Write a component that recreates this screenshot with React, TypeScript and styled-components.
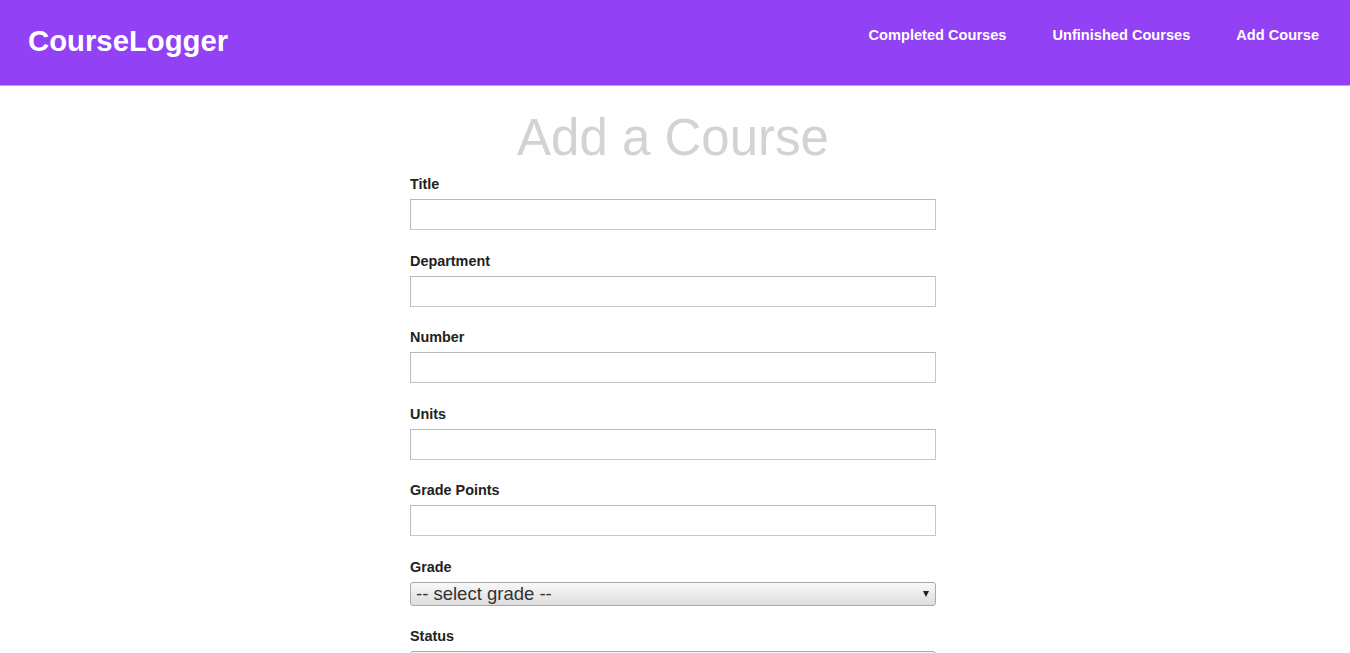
import React from 'react'
import styled, { createGlobalStyle } from 'styled-components'

const GlobalStyle = createGlobalStyle`
    html, body {
        margin: 0;
        padding: 0;
        background: #ffffff;
        font-family: "Liberation Sans", Arial, sans-serif;
    }
`

const fields = ['Title', 'Department', 'Number', 'Units', 'Grade Points']

const App = () => {
    return (
        <>
            <GlobalStyle />
            <NavBar>
                <Logo>CourseLogger</Logo>
                <NavLinks>
                    <NavLink>Completed Courses</NavLink>
                    <NavLink>Unfinished Courses</NavLink>
                    <NavLink>Add Course</NavLink>
                </NavLinks>
            </NavBar>
            <Main>
                <FormBlock>
                    <Heading>Add a Course</Heading>
                    {fields.map((name) => (
                        <Field key={name}>
                            <Label>{name}</Label>
                            <TextInput type="text" />
                        </Field>
                    ))}
                    <Field>
                        <Label>Grade</Label>
                        <SelectWrap>
                            <Select defaultValue="">
                                <option value="">-- select grade --</option>
                            </Select>
                            <Arrow />
                        </SelectWrap>
                    </Field>
                    <Field>
                        <Label>Status</Label>
                        <SelectWrap>
                            <Select defaultValue="">
                                <option value="">-- select status --</option>
                            </Select>
                            <Arrow />
                        </SelectWrap>
                    </Field>
                </FormBlock>
            </Main>
        </>
    )
}

export default App

const NavBar = styled.header`
    display: flex;
    align-items: flex-start;
    justify-content: space-between;
    height: 85px;
    box-sizing: border-box;
    padding: 0 31px 0 28px;
    background: #9241f5;
    box-shadow: 0 1px 0 #c49cf9;
`

const Logo = styled.div`
    color: #ffffff;
    font-size: 29.3px;
    font-weight: 700;
    line-height: 33px;
    margin-top: 24px;
`

const NavLinks = styled.nav`
    display: flex;
    gap: 46px;
    margin-top: 26px;
`

const NavLink = styled.a`
    color: #ffffff;
    font-size: 14.6px;
    font-weight: 700;
    line-height: 18px;
    cursor: pointer;
`

const Main = styled.main`
    display: flex;
    justify-content: center;
    padding-right: 4px;
`

const FormBlock = styled.div`
    display: flex;
    flex-direction: column;
    width: 526px;
`

const Heading = styled.h1`
    margin: 23px 0 9px;
    text-align: center;
    color: #d3d3d3;
    font-size: 51px;
    font-weight: 400;
    line-height: 59px;
`

const Field = styled.div`
    display: flex;
    flex-direction: column;
    margin-bottom: 22.5px;
`

const Label = styled.label`
    color: #222222;
    font-size: 14.4px;
    font-weight: 700;
    line-height: 16px;
    margin-bottom: 7px;
`

const TextInput = styled.input`
    box-sizing: border-box;
    width: 100%;
    height: 31px;
    margin: 0;
    border: 1px solid #c6c6c6;
    border-top-color: #b9b9b9;
    border-left-color: #b9b9b9;
    background: #ffffff;
    outline: none;
`

const SelectWrap = styled.div`
    position: relative;
    width: 100%;
`

const Select = styled.select`
    appearance: none;
    box-sizing: border-box;
    width: 100%;
    height: 24px;
    margin: 0;
    padding: 0 20px 0 5px;
    border: 1px solid #a9a9a9;
    border-radius: 3px;
    background: linear-gradient(#f8f8f8, #dddddd);
    color: #333333;
    font-family: "Liberation Sans", Arial, sans-serif;
    font-size: 18.5px;
    line-height: 22px;
`

const Arrow = styled.span`
    position: absolute;
    right: 7px;
    top: 9px;
    width: 0;
    height: 0;
    border-left: 3.5px solid transparent;
    border-right: 3.5px solid transparent;
    border-top: 6px solid #222222;
    pointer-events: none;
`
